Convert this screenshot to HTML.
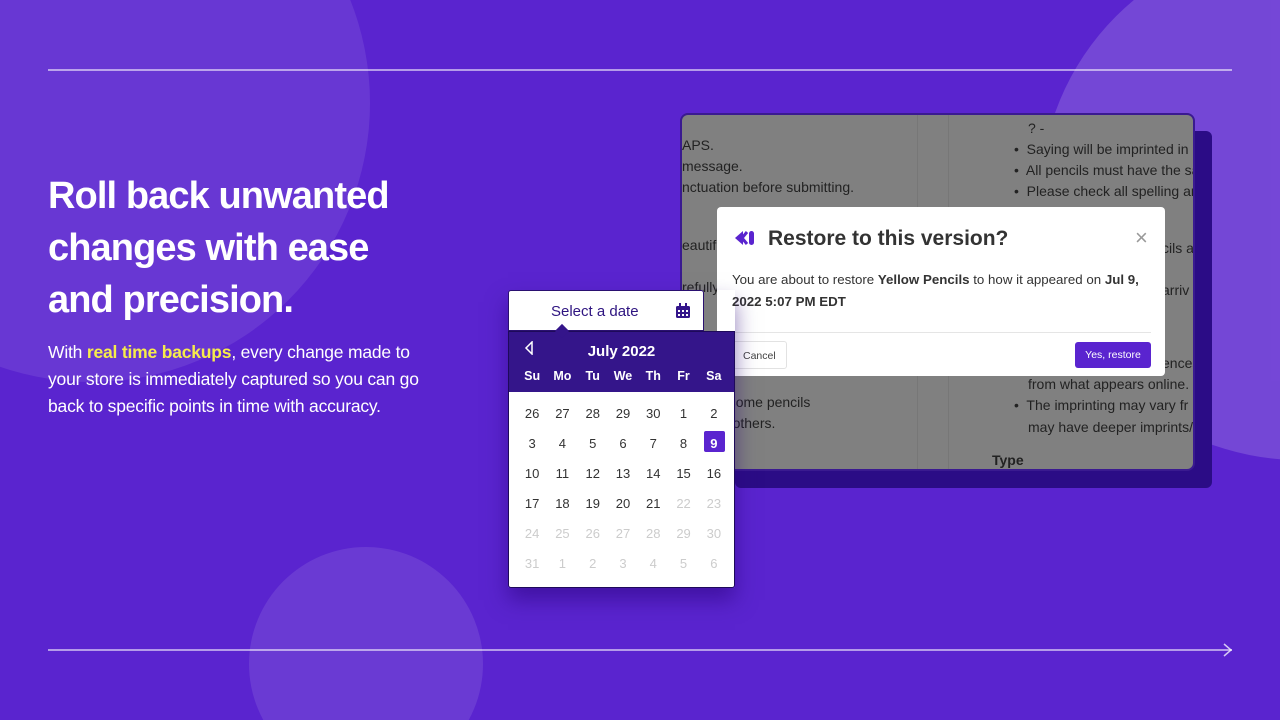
<!DOCTYPE html>
<html style="width:1280px;height:720px;overflow:hidden"><head><meta charset="utf-8"><style>
*{margin:0;padding:0;box-sizing:border-box}
body{width:1280px;height:720px;overflow:hidden;background:#5a24cf;font-family:"Liberation Sans",sans-serif;position:relative}
.wrap{position:absolute;left:0;top:0;width:1280px;height:720px;overflow:hidden}
.c{position:absolute;border-radius:50%;background:rgba(255,255,255,0.09)}
.line{position:absolute;left:48px;width:1184px;height:2px;background:rgba(255,255,255,0.55)}
h1{position:absolute;left:48px;top:170px;color:#fff;font-size:38px;line-height:52px;font-weight:bold;letter-spacing:-0.9px}
p.body{position:absolute;left:48px;top:339px;color:#fff;font-size:17.5px;line-height:27px;width:392px;letter-spacing:-0.2px}
p.body b{color:#f7ec4b;font-weight:bold}
.shadow{position:absolute;left:735px;top:131px;width:477px;height:357px;background:#2b0c86;border-radius:6px}
.screen{position:absolute;left:680px;top:113px;width:515px;height:358px;background:#808080;border:2px solid #3a1a90;border-radius:8px;overflow:hidden;color:#222;font-size:14px}
.screen div{position:absolute;white-space:nowrap}
.modal{position:absolute;left:717px;top:207px;width:448px;height:169px;background:#fff;border-radius:4px}
.cal{position:absolute;left:508px;top:290px;width:227px;height:298px;box-shadow:0 12px 20px rgba(40,0,120,.5)}
.calhead{position:absolute;left:0;top:0;width:196px;height:41px;background:#fff;border:1px solid #2a1070;border-radius:3px 3px 0 0;color:#2e1480;font-size:15px;padding:12px 0 0 42px}
.calpurp{position:absolute;left:0;top:41px;width:227px;height:62px;background:#34158a;border:1px solid #1e0a5a;color:#fff}
.calbody{position:absolute;left:0;top:102px;width:227px;height:196px;background:#fff;border:1px solid #1e0a5a;border-top:none;border-radius:0 0 3px 3px}
.row{position:absolute;left:8px;width:212px;display:flex}
.row span{width:30.3px;text-align:center;font-size:13px;color:#333}
.row span.g{color:#ccc}
</style></head><body>
<div class="wrap">
<div class="c" style="left:-188px;top:-176px;width:558px;height:558px"></div>
<div class="c" style="left:1040px;top:-60px;width:520px;height:520px;background:rgba(255,255,255,0.16)"></div>
<div class="c" style="left:249px;top:547px;width:234px;height:234px;background:rgba(255,255,255,0.1)"></div>
<div class="line" style="top:69px"></div>
<div class="line" style="top:649px"></div>
<svg style="position:absolute;left:1220px;top:643px" width="14" height="14"><path d="M4 1l7 6-7 6" stroke="rgba(255,255,255,.75)" stroke-width="1.5" fill="none"/></svg>
<h1>Roll back unwanted<br>changes with ease<br>and precision.</h1>
<p class="body">With <b>real time backups</b>, every change made to your store is immediately captured so you can go back to specific points in time with accuracy.</p>

<div class="shadow"></div>
<div class="screen">
<div style="left:0;top:22px">APS.</div>
<div style="left:0;top:43px">message.</div>
<div style="left:0;top:64px">nctuation before submitting.</div>
<div style="left:0;top:122px">eautif</div>
<div style="left:0;top:164px">refully</div>
<div style="left:0;top:279px">pencil. Some pencils</div>
<div style="left:0;top:300px">ng than others.</div>
<div style="left:235px;top:0;width:1px;height:360px;background:#777;position:absolute"></div>
<div style="left:266px;top:0;width:1px;height:360px;background:#777;position:absolute"></div>
<div style="left:346px;top:5px">? -</div>
<div style="left:332px;top:26px">•&nbsp; Saying will be imprinted in</div>
<div style="left:332px;top:47px">•&nbsp; All pencils must have the sa</div>
<div style="left:332px;top:68px">•&nbsp; Please check all spelling an</div>
<div style="left:480px;top:125px">cils a</div>
<div style="left:480px;top:167px">arriv</div>
<div style="left:480px;top:240px">ences</div>
<div style="left:346px;top:261px">from what appears online.</div>
<div style="left:332px;top:282px">•&nbsp; The imprinting may vary fr</div>
<div style="left:346px;top:304px">may have deeper imprints/</div>
<div style="left:310px;top:337px;font-weight:bold">Type</div>
</div>
<div class="modal">
<svg style="position:absolute;left:16px;top:22px" width="22" height="18"><path d="M10 2L2 9l8 7z" fill="#5a24cf"/><path d="M14 3l-5 6 5 6" stroke="#5a24cf" stroke-width="3" fill="none"/><rect x="16" y="2" width="5" height="14" rx="2.5" fill="#5a24cf"/></svg>
<div style="position:absolute;left:51px;top:20px;font-size:21px;font-weight:bold;color:#333">Restore to this version?</div>
<div style="position:absolute;left:418px;top:18px;font-size:22px;color:#999;font-weight:300">×</div>
<div style="position:absolute;left:15px;top:62px;width:430px;font-size:13.3px;line-height:22px;color:#333">You are about to restore <b>Yellow Pencils</b> to how it appeared on <b>Jul 9, 2022 5:07 PM EDT</b></div>
<div style="position:absolute;left:15px;top:125px;width:419px;height:1px;background:#e5e5e5"></div>
<div style="position:absolute;left:15px;top:134px;width:55px;height:28px;border:1px solid #e2e2e2;border-radius:3px;font-size:10.5px;color:#444;padding:8px 0 0 10px">Cancel</div>
<div style="position:absolute;left:358px;top:135px;width:76px;height:26px;background:#5a24cf;border-radius:3px;font-size:10.5px;color:#fff;text-align:center;padding-top:7px">Yes, restore</div>
</div>

<div class="cal">
<div class="calhead">Select a date
<svg style="position:absolute;left:166px;top:12px" width="16" height="16"><rect x="1" y="3" width="14" height="12" rx="1.5" fill="#34158a"/><rect x="4" y="0" width="2" height="4" fill="#34158a"/><rect x="10" y="0" width="2" height="4" fill="#34158a"/><g fill="#fff"><rect x="3" y="7" width="2" height="2"/><rect x="7" y="7" width="2" height="2"/><rect x="11" y="7" width="2" height="2"/><rect x="3" y="11" width="2" height="2"/><rect x="7" y="11" width="2" height="2"/><rect x="11" y="11" width="2" height="2"/></g></svg>
</div>
<div style="position:absolute;left:49px;top:36px;width:10px;height:10px;background:#34158a;transform:rotate(45deg);z-index:2"></div>
<div class="calpurp">
<svg style="position:absolute;left:15px;top:9px" width="10" height="14"><path d="M8 1L2 7l6 6z" stroke="#fff" stroke-width="1.5" fill="none"/></svg>
<div style="position:absolute;left:0;width:225px;top:11px;text-align:center;font-size:15px;font-weight:bold">July 2022</div>
<div class="row" style="top:37px"><span style="color:#fff;font-weight:bold;font-size:12.5px">Su</span><span style="color:#fff;font-weight:bold;font-size:12.5px">Mo</span><span style="color:#fff;font-weight:bold;font-size:12.5px">Tu</span><span style="color:#fff;font-weight:bold;font-size:12.5px">We</span><span style="color:#fff;font-weight:bold;font-size:12.5px">Th</span><span style="color:#fff;font-weight:bold;font-size:12.5px">Fr</span><span style="color:#fff;font-weight:bold;font-size:12.5px">Sa</span></div>
</div>
<div class="calbody">
<div class="row" style="top:14px"><span>26</span><span>27</span><span>28</span><span>29</span><span>30</span><span>1</span><span>2</span></div>
<div class="row" style="top:44px"><span>3</span><span>4</span><span>5</span><span>6</span><span>7</span><span>8</span><span style="position:relative"><i style="position:absolute;left:5px;top:-5px;width:21px;height:21px;background:#5a24cf;border-radius:2px"></i><b style="position:relative;color:#fff;font-weight:bold">9</b></span></div>
<div class="row" style="top:74px"><span>10</span><span>11</span><span>12</span><span>13</span><span>14</span><span>15</span><span>16</span></div>
<div class="row" style="top:104px"><span>17</span><span>18</span><span>19</span><span>20</span><span>21</span><span class="g">22</span><span class="g">23</span></div>
<div class="row" style="top:134px"><span class="g">24</span><span class="g">25</span><span class="g">26</span><span class="g">27</span><span class="g">28</span><span class="g">29</span><span class="g">30</span></div>
<div class="row" style="top:164px"><span class="g">31</span><span class="g">1</span><span class="g">2</span><span class="g">3</span><span class="g">4</span><span class="g">5</span><span class="g">6</span></div>
</div>
</div>
</div>
</body></html>
